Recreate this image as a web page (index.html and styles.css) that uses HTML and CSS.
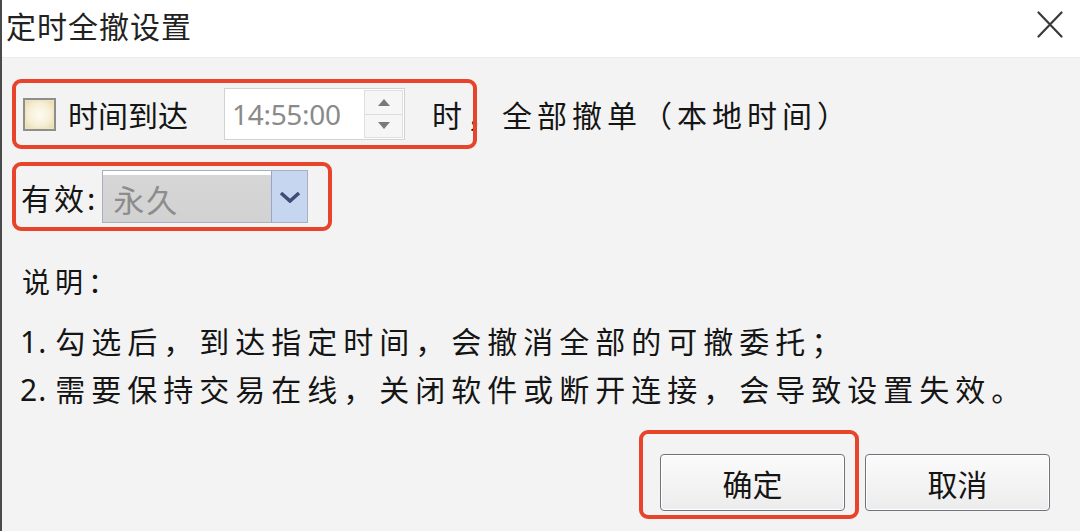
FILE: index.html
```html
<!DOCTYPE html>
<html lang="zh-CN">
<head>
<meta charset="utf-8">
<title>定时全撤设置</title>
<link rel="stylesheet" href="styles.css">
</head>
<body>
<div class="dialog">
  <header class="titlebar">
    <span class="title">定时全撤设置</span>
    <svg class="close" width="26" height="27" viewBox="0 0 26 27"><path d="M1.5 1.5L24.5 25.5M24.5 1.5L1.5 25.5" stroke="#3a3a3a" stroke-width="2.2" stroke-linecap="round" fill="none"/></svg>
  </header>
  <main class="content">
    <div class="row row-time">
      <span class="hl hl-time"></span>
      <span class="checkbox"></span>
      <span class="label label-time">时间到达</span>
      <div class="spin">
        <span class="spin-value">14:55:00</span>
        <div class="spin-btns">
          <span class="spin-btn"><svg width="12" height="7" viewBox="0 0 12 7"><path d="M6 0L12 7H0Z" fill="#7a7a7a"/></svg></span>
          <span class="spin-btn"><svg width="12" height="7" viewBox="0 0 12 7"><path d="M0 0H12L6 7Z" fill="#7a7a7a"/></svg></span>
        </div>
      </div>
      <span class="suffix">时，全部撤单（本地时间）</span>
    </div>
    <div class="row row-valid">
      <span class="hl hl-valid"></span>
      <span class="label label-valid">有效:</span>
      <div class="select">
        <span class="select-value">永久</span>
        <span class="select-btn"><svg width="22" height="12" viewBox="0 0 22 12"><path d="M2 2L11 10L20 2" stroke="#3c4e74" stroke-width="3.6" fill="none" stroke-linejoin="miter"/></svg></span>
      </div>
    </div>
    <p class="note-title">说明：</p>
    <p class="note"><span class="num">1.</span>勾选后，到达指定时间，会撤消全部的可撤委托；</p>
    <p class="note"><span class="num">2.</span>需要保持交易在线，关闭软件或断开连接，会导致设置失效。</p>
    <div class="actions">
      <div class="ok-wrap">
        <span class="hl hl-ok"></span>
        <button class="btn">确定</button>
      </div>
      <button class="btn">取消</button>
    </div>
  </main>
</div>
</body>
</html>
```
FILE: styles.css
```css
* { box-sizing: border-box; }
html, body {
  margin: 0;
  padding: 0;
  width: 1080px;
  height: 531px;
  overflow: hidden;
}
body {
  font-family: "Noto Sans CJK SC", "Noto Sans", sans-serif;
  color: #151515;
  background: #f3f3f3;
}
.dialog {
  width: 1080px;
  height: 531px;
  display: flex;
  flex-direction: column;
  border-left: 2px solid #4a4a4a;
  background: #f3f3f3;
}
.titlebar {
  height: 58px;
  flex: none;
  background: #ffffff;
  border-bottom: 1px solid #ececec;
  display: flex;
  align-items: center;
  justify-content: space-between;
  padding: 0 17px 0 4px;
}
.title {
  font-size: 30px;
  line-height: 34px;
  color: #222;
  margin-top: -8px;
  letter-spacing: 1px;
}
.close {
  display: block;
  margin-top: -8px;
}
.content {
  flex: 1;
  padding: 0 12px 0 10px;
  display: flex;
  flex-direction: column;
}
.row {
  position: relative;
  display: flex;
  align-items: center;
}
.hl {
  position: absolute;
  left: 0;
  top: 0;
  border: 4px solid #e8442b;
  border-radius: 9px;
  pointer-events: none;
}
.row-time {
  height: 70px;
  margin-top: 21px;
}
.hl-time { width: 465px; height: 70px; }
.checkbox {
  width: 33px;
  height: 33px;
  margin-left: 11px;
  border: 2px solid #8e8e8e;
  background: radial-gradient(circle at 50% 50%, #fdfbf3 0%, #f6efd6 55%, #e4d6a4 100%);
  box-shadow: inset 0 0 0 1px #efe4bd;
}
.label {
  font-size: 30px;
  line-height: 40px;
}
.label-time { margin-left: 12px; }
.spin {
  margin-left: 36px;
  width: 181px;
  height: 52px;
  background: #fff;
  border: 1px solid #d2d2d2;
  display: flex;
  align-items: center;
  justify-content: space-between;
}
.spin-value {
  padding-left: 7px;
  font-family: "Noto Sans", sans-serif;
  font-size: 28px;
  color: #8a8a8a;
  letter-spacing: -0.3px;
}
.spin-btns {
  width: 39px;
  height: 48px;
  margin-right: 1px;
  display: flex;
  flex-direction: column;
  border: 1px solid #e0e0e0;
}
.spin-btn {
  flex: 1;
  display: flex;
  align-items: center;
  justify-content: center;
  background: #f6f6f6;
}
.spin-btn + .spin-btn { border-top: 1px solid #dcdcdc; }
.suffix {
  margin-left: 27px;
  font-size: 30px;
  line-height: 40px;
  letter-spacing: 5px;
}
.row-valid {
  height: 69px;
  margin-top: 13px;
}
.hl-valid { width: 320px; height: 69px; }
.label-valid {
  margin-left: 9px;
  letter-spacing: 3px;
}
.select {
  margin-left: 4px;
  width: 206px;
  height: 53px;
  border: 1px solid #a9afbb;
  background: linear-gradient(#ffffff 0, #ffffff 4px, #d6d6d6 4px, #d2d2d2 100%);
  display: flex;
  align-items: center;
  justify-content: space-between;
}
.select-value {
  padding-left: 10px;
  padding-top: 4px;
  font-size: 31px;
  color: #8c8c8c;
  letter-spacing: 2px;
}
.select-btn {
  width: 36px;
  height: 100%;
  background: #c7d6f0;
  border-left: 1px solid #93a6cb;
  display: flex;
  align-items: center;
  justify-content: center;
}
.note-title {
  margin: 32px 0 0 10px;
  font-size: 28px;
  line-height: 36px;
  letter-spacing: 5px;
}
.note {
  margin: 0 0 0 8px;
  font-size: 30px;
  line-height: 46px;
  letter-spacing: 6px;
}
.note-title + .note { margin-top: 18px; }
.num {
  font-family: "Noto Sans", sans-serif;
  letter-spacing: 1px;
  margin-right: 8px;
}
.actions {
  margin-top: 41px;
  display: flex;
  justify-content: flex-end;
  gap: 20px;
  padding-right: 18px;
}
.ok-wrap {
  position: relative;
  display: flex;
}
.hl-ok {
  left: -21px;
  top: -24px;
  width: 220px;
  height: 89px;
}
.btn {
  width: 185px;
  height: 57px;
  border: 1px solid #6f747c;
  border-radius: 4px;
  background: linear-gradient(#fbfbfb, #ececec);
  box-shadow: inset 0 0 0 1px #ffffff;
  font-family: "Noto Sans CJK SC", sans-serif;
  font-size: 30px;
  color: #151515;
  padding: 0;
  line-height: 1;
}
```
